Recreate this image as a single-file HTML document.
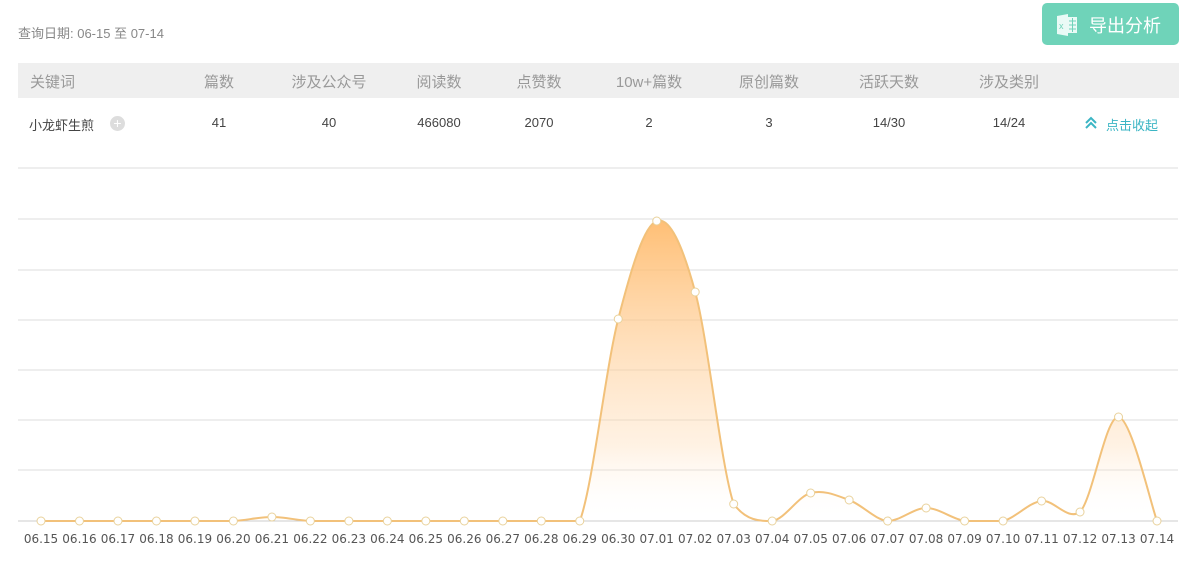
<!DOCTYPE html>
<html><head><meta charset="utf-8"><style>
body{margin:0;width:1192px;height:578px;background:#fff;font-family:"Liberation Sans","Noto Sans CJK SC",sans-serif;position:relative;overflow:hidden;color:#666}
.a{position:absolute;white-space:nowrap}
.hd{position:absolute;left:18px;top:63px;width:1161px;height:35px;background:#efefef}
.h{position:absolute;top:71px;font-size:15px;color:#999;transform:translateX(-50%)}
.r{position:absolute;top:115px;font-size:13px;color:#444;transform:translateX(-50%)}
</style></head><body>
<div class="a" style="left:18px;top:23px;font-size:13px;color:#888">查询日期: 06-15 至 07-14</div>
<div class="a" style="left:1042px;top:3px;width:137px;height:42px;background:#6fd3b9;border-radius:5px"></div>
<svg class="a" style="left:1055px;top:13px" width="24" height="24" viewBox="0 0 24 24"><path d="M2 3 L13 1 V23 L2 21Z" fill="#eafaf6"/><rect x="13" y="4" width="9" height="16" fill="#eafaf6"/><text x="4" y="16" font-size="9" fill="#6fd3b9" font-family="Liberation Sans">x</text><path d="M14 8H21M14 12H21M14 16H21M17.5 5V19" stroke="#6fd3b9" stroke-width="1"/></svg>
<div class="a" style="left:1089px;top:12px;font-size:18px;color:#fff">导出分析</div>
<div class="hd"></div>
<div class="a" style="left:30px;top:71px;font-size:15px;color:#999">关键词</div>
<div class="h" style="left:219px">篇数</div><div class="h" style="left:329px">涉及公众号</div><div class="h" style="left:439px">阅读数</div><div class="h" style="left:539px">点赞数</div><div class="h" style="left:649px">10w+篇数</div><div class="h" style="left:769px">原创篇数</div><div class="h" style="left:889px">活跃天数</div><div class="h" style="left:1009px">涉及类别</div>
<div class="a" style="left:29px;top:115px;font-size:13px;color:#444">小龙虾生煎</div>
<div class="a" style="left:110px;top:116px;width:15px;height:15px;border-radius:50%;background:#ddd;color:#fff;font-size:14px;line-height:14px;text-align:center">+</div>
<div class="r" style="left:219px">41</div><div class="r" style="left:329px">40</div><div class="r" style="left:439px">466080</div><div class="r" style="left:539px">2070</div><div class="r" style="left:649px">2</div><div class="r" style="left:769px">3</div><div class="r" style="left:889px">14/30</div><div class="r" style="left:1009px">14/24</div>
<svg class="a" style="left:1084px;top:116px" width="14" height="14"><path d="M2 7L7 2L12 7M2 12L7 7L12 12" fill="none" stroke="#3bb5c4" stroke-width="2"/></svg>
<div class="a" style="left:1106px;top:115px;font-size:13px;color:#3bb5c4">点击收起</div>
<svg id="c" class="a" style="left:0;top:0" width="1192" height="578"></svg>
<script>
var s=document.getElementById('c'),h='';
h+='<defs><linearGradient id="g" x1="0" y1="0" x2="0" y2="1"><stop offset="0" stop-color="#ffb866" stop-opacity="0.9"/><stop offset="0.75" stop-color="#ffd9b0" stop-opacity="0.35"/><stop offset="1" stop-color="#fff" stop-opacity="0"/></linearGradient></defs>';
[168,219,270,320,370,420,470].forEach(function(y){h+='<line x1="18" x2="1178" y1="'+y+'" y2="'+y+'" stroke="#ddd"/>';});
h+='<line x1="18" x2="1178" y1="521" y2="521" stroke="#ccc"/>';
var v=[521,521,521,521,521,521,517,521,521,521,521,521,521,521,521,319,221,292,504,521,493,500,521,508,521,521,501,512,417,521];
var lb=['06.15','06.16','06.17','06.18','06.19','06.20','06.21','06.22','06.23','06.24','06.25','06.26','06.27','06.28','06.29','06.30','07.01','07.02','07.03','07.04','07.05','07.06','07.07','07.08','07.09','07.10','07.11','07.12','07.13','07.14'];
var P=v.map(function(y,i){return [41+i*38.483,y];});
var d='M'+P[0][0]+' '+P[0][1];
for(var i=0;i<P.length-1;i++){var p0=P[Math.max(i-1,0)],p1=P[i],p2=P[i+1],p3=P[Math.min(i+2,P.length-1)];
var c1x=p1[0]+(p2[0]-p0[0])/6,c1y=p1[1]+(p2[1]-p0[1])/6,c2x=p2[0]-(p3[0]-p1[0])/6,c2y=p2[1]-(p3[1]-p1[1])/6;
c1y=Math.min(c1y,521);c2y=Math.min(c2y,521);
d+=' C'+c1x+' '+c1y+' '+c2x+' '+c2y+' '+p2[0]+' '+p2[1];}
h+='<path d="'+d+' L1157 521 L41 521Z" fill="url(#g)"/>';
h+='<path d="'+d+'" fill="none" stroke="#f2c17a" stroke-width="2"/>';
P.forEach(function(p,i){h+='<circle cx="'+p[0]+'" cy="'+p[1]+'" r="4" fill="#fff" stroke="#e9d29c"/>';
h+='<text x="'+p[0]+'" y="543" font-size="12" fill="#555" text-anchor="middle" font-family="DejaVu Sans,sans-serif">'+lb[i]+'</text>';});
s.innerHTML=h;
</script>
</body></html>
